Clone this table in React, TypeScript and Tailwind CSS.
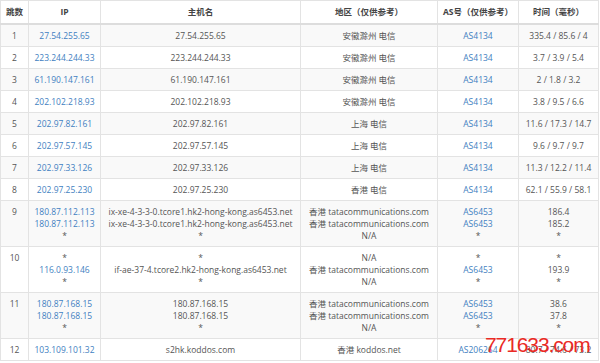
import React from "react";

type Row = { hop: string; ip: string[]; host: string[]; region: string[]; as: string[]; time: string[] };

const single = (hop: string, ip: string, region: string, as: string, time: string, host?: string): Row => ({
  hop,
  ip: [ip],
  host: [host ?? ip],
  region: [region],
  as: [as],
  time: [time],
});

const tata = "香港 tatacommunications.com";
const rows: Row[] = [
  single("1", "27.54.255.65", "安徽滁州 电信", "AS4134", "335.4 / 85.6 / 4"),
  single("2", "223.244.244.33", "安徽滁州 电信", "AS4134", "3.7 / 3.9 / 5.4"),
  single("3", "61.190.147.161", "安徽滁州 电信", "AS4134", "2 / 1.8 / 3.2"),
  single("4", "202.102.218.93", "安徽滁州 电信", "AS4134", "3.8 / 9.5 / 6.6"),
  single("5", "202.97.82.161", "上海 电信", "AS4134", "11.6 / 17.3 / 14.7"),
  single("6", "202.97.57.145", "上海 电信", "AS4134", "9.6 / 9.7 / 9.7"),
  single("7", "202.97.33.126", "上海 电信", "AS4134", "11.3 / 12.2 / 11.4"),
  single("8", "202.97.25.230", "香港 电信", "AS4134", "62.1 / 55.9 / 58.1"),
  {
    hop: "9",
    ip: ["180.87.112.113", "180.87.112.113", "*"],
    host: ["ix-xe-4-3-3-0.tcore1.hk2-hong-kong.as6453.net", "ix-xe-4-3-3-0.tcore1.hk2-hong-kong.as6453.net", "*"],
    region: [tata, tata, "N/A"],
    as: ["AS6453", "AS6453", "*"],
    time: ["186.4", "185.2", "*"],
  },
  {
    hop: "10",
    ip: ["*", "116.0.93.146", "*"],
    host: ["*", "if-ae-37-4.tcore2.hk2-hong-kong.as6453.net", "*"],
    region: ["N/A", tata, "N/A"],
    as: ["*", "AS6453", "*"],
    time: ["*", "193.9", "*"],
  },
  {
    hop: "11",
    ip: ["180.87.168.15", "180.87.168.15", "*"],
    host: ["180.87.168.15", "180.87.168.15", "*"],
    region: [tata, tata, "N/A"],
    as: ["AS6453", "AS6453", "*"],
    time: ["38.6", "37.8", "*"],
  },
  single("12", "103.109.101.32", "香港 koddos.net", "AS206264", "80.7 / 74.6 / 73.2", "s2hk.koddos.com"),
];

const td = "border border-[#e3e3e3] px-1 pt-[5px] pb-[4px] align-top text-center whitespace-nowrap";
const th = "border border-[#e3e3e3] border-b-2 border-b-[#dddddd] px-1 pt-[5px] pb-[5px] text-center font-bold text-[#444] whitespace-nowrap";

function Lines({ items, link }: { items: string[]; link?: boolean }) {
  return (
    <>
      {items.map((t, i) => (
        <div key={i} className={link && t !== "*" ? "text-[#3f7fc1]" : ""}>
          {t}
        </div>
      ))}
    </>
  );
}

export default function App() {
  return (
    <div className="relative w-[600px] h-[363px] bg-white overflow-hidden">
      <table
        className="table-fixed border-collapse w-[598px] text-[8.5px] leading-[12px] text-[#555]"
        style={{ fontFamily: '"Open Sans", "Noto Sans CJK SC", sans-serif' }}
      >
        <colgroup>
          <col className="w-[28px]" />
          <col className="w-[72px]" />
          <col className="w-[200px]" />
          <col className="w-[137px]" />
          <col className="w-[81px]" />
          <col className="w-[80px]" />
        </colgroup>
        <thead>
          <tr className="bg-white">
            <th className={th}>跳数</th>
            <th className={th}>IP</th>
            <th className={th}>主机名</th>
            <th className={th}>地区（仅供参考）</th>
            <th className={th}>AS号（仅供参考）</th>
            <th className={th}>时间（毫秒）</th>
          </tr>
        </thead>
        <tbody>
          {rows.map((r, i) => (
            <tr key={r.hop} className={i % 2 === 0 ? "bg-[#f9f9f9]" : "bg-white"}>
              <td className={td}>{r.hop}</td>
              <td className={td}>
                <Lines items={r.ip} link />
              </td>
              <td className={td}>
                <Lines items={r.host} />
              </td>
              <td className={td}>
                <Lines items={r.region} />
              </td>
              <td className={td}>
                <Lines items={r.as} link />
              </td>
              <td className={td}>
                <Lines items={r.time} />
              </td>
            </tr>
          ))}
        </tbody>
      </table>
      <div
        className="absolute left-[485px] top-[333px] text-[21px] leading-[24px] tracking-[-1.1px] text-[#ea2a25]"
        style={{ fontFamily: '"Liberation Sans", Arial, sans-serif' }}
      >
        771633.com
      </div>
    </div>
  );
}
